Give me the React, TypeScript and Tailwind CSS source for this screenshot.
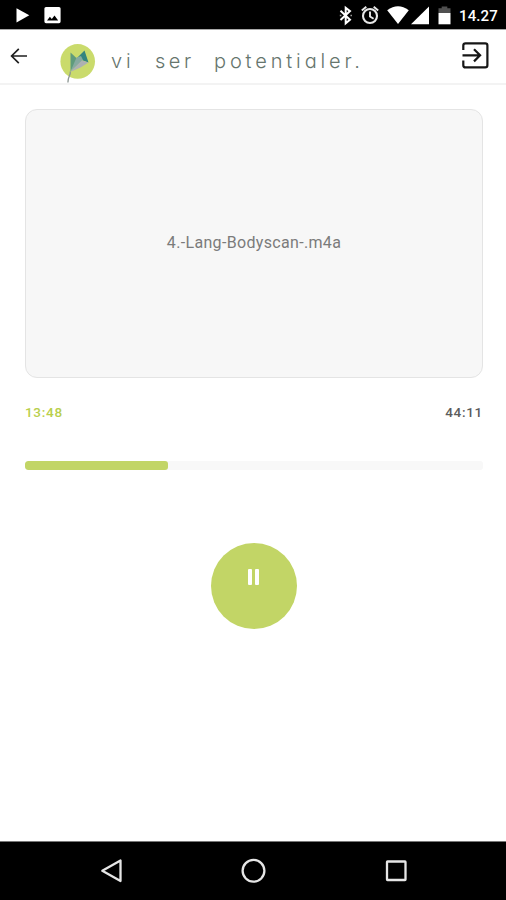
const StatusBar = () => {
  return (
    <div className="flex h-[30px] shrink-0 items-start border-b border-[#a8a8a8] bg-black text-white">
      <svg width="506" height="29" viewBox="0 0 506 29" className="w-[456px] shrink-0" preserveAspectRatio="xMinYMin slice">
        {/* play + picture notifications */}
        <path d="M16.500 8.200v14.200L29.300 15.300z" fill="#fff" />
        <path
          fillRule="evenodd"
          fill="#fff"
          d="M46 7h13a1.600 1.600 0 0 1 1.600 1.600v13a1.600 1.600 0 0 1-1.600 1.600h-13a1.600 1.600 0 0 1-1.600-1.600v-13a1.600 1.600 0 0 1 1.600-1.600zM47 20.400h11.200l-3.700-5-2.700 3.500-1.900-2.200z"
        />
        {/* bluetooth */}
        <path d="M340.500 10.700l9.500 9-4.300 3.600V7.700l4.300 3.400-9.500 9" fill="none" stroke="#fff" strokeWidth="2" />
        <path d="M339.800 15.400h1.600M350.400 15.400h1.600" stroke="#999" strokeWidth="1.500" />
        {/* alarm */}
        <circle cx="370" cy="16" r="7" fill="none" stroke="#e8e8e8" strokeWidth="2.100" />
        <path d="M370 11.500v5l3.600 2.200M361.800 10.600l4.500-3.800M378.200 10.600l-4.500-3.800" fill="none" stroke="#e8e8e8" strokeWidth="1.900" />
        {/* wifi, signal */}
        <path d="M387.200 10.300Q398 2.300 408.800 10.300L398 24z" fill="#fff" />
        <path d="M411 24.300h18V6.500z" fill="#fff" />
        {/* battery */}
        <path d="M438.500 8.200h3.200V6.500h5.600v1.700h3.200V13h-12z" fill="#505050" />
        <path d="M438.500 13h12v11.300h-12z" fill="#fff" />
      </svg>
      <span className="ml-[3px] mt-[4px] text-[15px] leading-[24px] font-medium tracking-[0.1px]">14.27</span>
    </div>
  );
};

const Kite = () => {
  return (
    <svg width="40" height="42" viewBox="58 42 40 42">
      <circle cx="77.700" cy="61.400" r="17.300" fill="#cadb6c" />
      <path d="M70.500 52.500l7.500 7-7.500 12z" fill="#5f9b7c" />
      <path d="M77 58l7.500-7.500 4 12-8-3z" fill="#35857f" />
      <path d="M76.500 57.500l4.500-1.500 2 4-12.500 11.500z" fill="#86aaa0" />
      <path d="M70.300 72l11.500-11.500 6.700 2-8 5z" fill="#adb1b2" />
      <path d="M70.300 71.500c.5 4-2.500 5-2.400 11" fill="none" stroke="#8c9692" strokeWidth="1.300" />
    </svg>
  );
};

const Header = () => {
  return (
    <header className="flex h-[55px] shrink-0 border-b-2 border-[#f3f3f3]">
      <button className="ml-[10px] mt-[18px] h-4 w-[18px]" aria-label="Tilbage">
        <svg width="18" height="16" viewBox="0 0 18 16" fill="none" stroke="#202020" strokeWidth="1.700">
          <path d="M17 8H2M8.800 .8L1.600 8l7.200 7.200" />
        </svg>
      </button>
      <div className="ml-[30px] mt-[12px] shrink-0">
        <Kite />
      </div>
      <div className="ml-[13px] mt-[18px] flex h-[26px] w-[251px] shrink-0 text-[20px] leading-[26px] font-light text-[#66756d] [font-family:Inter,sans-serif] [font-feature-settings:'cv11']">
        <span className="w-[44px] shrink-0 tracking-[4px]">vi</span>
        <span className="w-[59px] shrink-0 tracking-[3.500px]">ser</span>
        <span className="shrink-0 tracking-[3.850px]">potentialer.</span>
      </div>
      <button className="ml-[100px] mt-[12px] h-[27px] w-[27px] shrink-0" aria-label="Log ud">
        <svg width="27" height="27" viewBox="0 0 27 27" fill="none" stroke="#161616" strokeWidth="2.200">
          <path d="M1.300 8V3.500Q1.300 1.300 3.500 1.300h19.700Q25.400 1.300 25.400 3.500v19.700q0 2.200-2.200 2.200H3.500q-2.200 0-2.200-2.200V18.500M.5 13.300h17M12 7.200l6.100 6.100-6.100 6.100" />
        </svg>
      </button>
    </header>
  );
};

const NavBar = () => {
  return (
    <nav className="flex h-[59px] shrink-0 border-t border-[#777] bg-black">
      <svg width="506" height="58" viewBox="0 842 506 58" fill="none" stroke="#e6e6e6" strokeWidth="2.300">
        <path d="M120.500 860.500v20.600L102.300 870.800z" strokeLinejoin="round" />
        <circle cx="253.500" cy="870.800" r="10.900" />
        <rect x="387" y="861.500" width="18.500" height="18.500" rx="0.500" />
      </svg>
    </nav>
  );
};

const App = () => {
  const elapsed = 13 * 60 + 48;
  const duration = 44 * 60 + 11;

  return (
    <div className="flex h-[900px] w-[506px] flex-col overflow-hidden bg-white [font-family:Roboto,sans-serif]">
      <StatusBar />
      <Header />
      <main className="flex flex-1 flex-col px-[25px] pt-[24px]">
        <div className="flex h-[269px] w-[458px] items-center justify-center rounded-xl border-[1.500px] border-[#e4e4e4] bg-[#f7f7f7] pb-[2px]">
          <span className="text-[16px] leading-6 tracking-[0.330px] text-[#7b7b7b]">4.-Lang-Bodyscan-.m4a</span>
        </div>
        <div className="mt-[24px] flex h-[21px] w-[458px] justify-between text-[13.500px] leading-5 font-medium tracking-[0.700px]">
          <span className="text-[#b9cf4c]">13:48</span>
          <span className="text-[#5c5c5c]">44:11</span>
        </div>
        <div className="mt-[37.500px] h-[9px] w-[458px] overflow-hidden rounded-[3px] bg-[#f8f8f8]">
          <div className="h-full rounded-[3px] bg-[#c2d566]" style={{ width: `${(elapsed / duration) * 100}%` }} />
        </div>
        <button
          className="ml-[186px] mt-[73.500px] flex h-[86px] w-[86px] justify-center gap-[3px] rounded-full bg-[#c2d566] pt-[26px] pr-[1px]"
          aria-label="Pause"
        >
          <span className="h-[16px] w-[4px] rounded-[1px] bg-white" />
          <span className="h-[16px] w-[4px] rounded-[1px] bg-white" />
        </button>
      </main>
      <NavBar />
    </div>
  );
};

export default App;
